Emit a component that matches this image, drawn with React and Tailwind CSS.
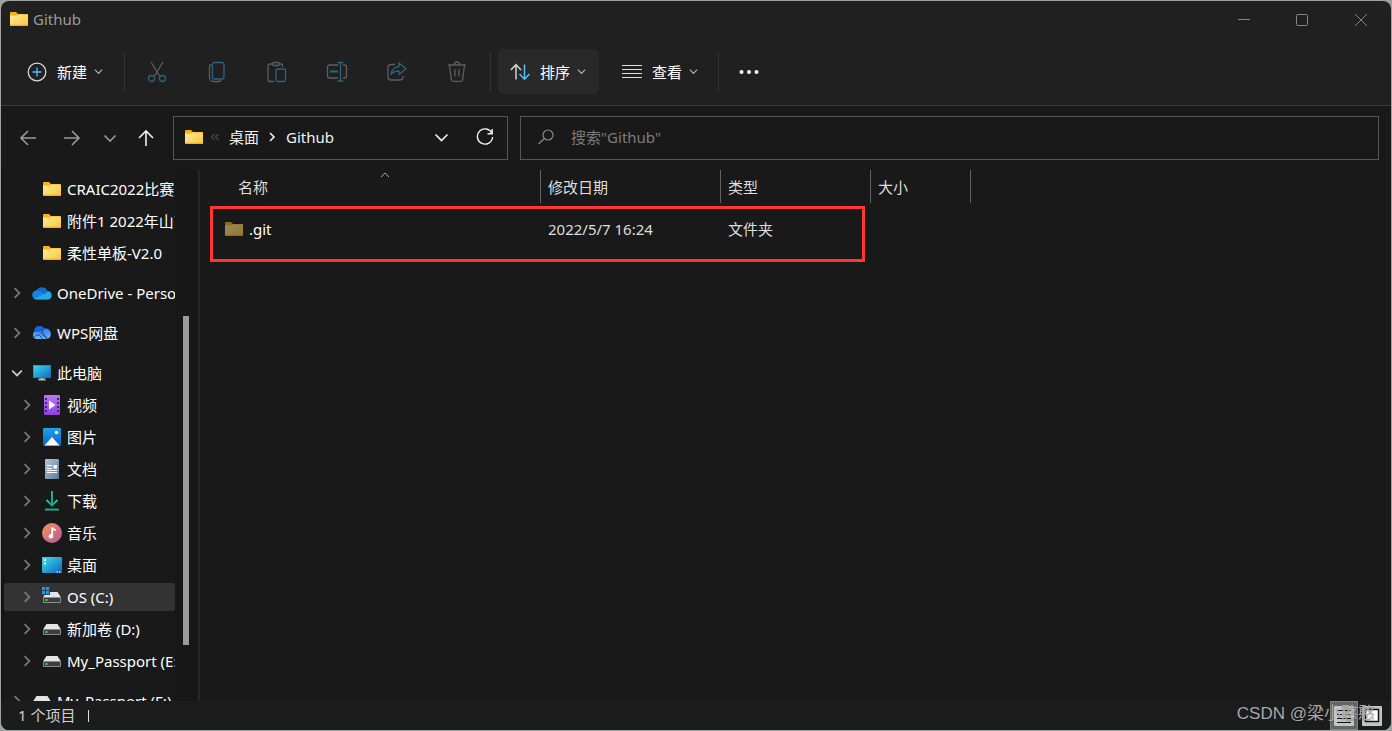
import React, { useState } from "react";

const tree = [
  { label: "CRAIC2022比赛资料", icon: "folder", level: 1, leaf: true },
  { label: "附件1 2022年山东省", icon: "folder", level: 1, leaf: true },
  { label: "柔性单板-V2.0", icon: "folder", level: 1, leaf: true, gap: true },
  { label: "OneDrive - Personal", icon: "onedrive", level: 0, gap: true },
  { label: "WPS网盘", icon: "wps", level: 0, gap: true },
  { label: "此电脑", icon: "pc", level: 0, open: true },
  { label: "视频", icon: "video", level: 1 },
  { label: "图片", icon: "picture", level: 1 },
  { label: "文档", icon: "doc", level: 1 },
  { label: "下载", icon: "download", level: 1 },
  { label: "音乐", icon: "music", level: 1 },
  { label: "桌面", icon: "desktop", level: 1 },
  { label: "OS (C:)", icon: "osdrive", level: 1 },
  { label: "新加卷 (D:)", icon: "drive", level: 1 },
  { label: "My_Passport (E:)", icon: "drive", level: 1, gap: true },
  { label: "My_Passport (F:)", icon: "drive", level: 0 },
];

function Folder({ className = "" }) {
  return (
    <svg width="20" height="20" viewBox="0 0 20 20" className={"shrink-0 " + className}>
      <defs>
        <linearGradient id="folder" x1="0" y1="0" x2="1" y2="1">
          <stop offset="0" stopColor="#ffe9a0" />
          <stop offset="1" stopColor="#ffc633" />
        </linearGradient>
      </defs>
      <path d="M1 4a1 1 0 0 1 1-1h5l2 2h9a1 1 0 0 1 1 1v4H1z" fill="#f8b20f" />
      <path d="M1 6.5h6.5L9 5.4h9.5a.5.5 0 0 1 .5.5V16a1 1 0 0 1-1 1H2a1 1 0 0 1-1-1z" fill="url(#folder)" />
      <path d="M1 16.3h18" stroke="#e9a820" strokeWidth="1" />
    </svg>
  );
}

function Drive({ os }) {
  return (
    <svg width="20" height="20" viewBox="0 0 20 20" className="shrink-0">
      <path d="M4.5 5h11L19 10.5H1z" fill="#e4e4e8" />
      <rect x="1" y="10" width="18" height="6" rx="1" fill="#8b8b8b" />
      <rect x="2" y="11" width="16" height="4" fill="#3d3d3d" />
      <rect x="3.5" y="12" width="2" height="2" fill="#3ddc3d" />
      {os && (
        <>
          <path d="M0 0h8v8H0z" fill="#333" />
          <path d="M0 0h3.2v3.2H0zM4 0h3.2v3.2H4zM0 4h3.2v3.2H0zM4 4h3.2v3.2H4z" fill="#2196e8" />
        </>
      )}
    </svg>
  );
}

function ItemIcon({ name }) {
  if (name === "folder") return <Folder />;
  if (name === "drive") return <Drive />;
  if (name === "osdrive") return <Drive os />;
  return (
    <svg width="20" height="20" viewBox="0 0 20 20" className="shrink-0">
      <defs>
        <linearGradient id="screen" x1="0" y1="0" x2="1" y2="1">
          <stop offset="0" stopColor="#3ee0e6" />
          <stop offset="1" stopColor="#0c66c4" />
        </linearGradient>
        <linearGradient id="film" x1="0" y1="0" x2="0" y2="1">
          <stop offset="0" stopColor="#b877f5" />
          <stop offset="1" stopColor="#8b41e0" />
        </linearGradient>
        <linearGradient id="photo" x1="0" y1="0" x2="0" y2="1">
          <stop offset="0" stopColor="#1ea4ee" />
          <stop offset="1" stopColor="#0a62bb" />
        </linearGradient>
        <linearGradient id="paper" x1="0" y1="0" x2="1" y2="1">
          <stop offset="0" stopColor="#b4c8d8" />
          <stop offset="1" stopColor="#567b9e" />
        </linearGradient>
        <linearGradient id="note" x1="0" y1="0" x2="1" y2="1">
          <stop offset="0" stopColor="#f79558" />
          <stop offset="1" stopColor="#b3559b" />
        </linearGradient>
        <linearGradient id="arrow" x1="0" y1="0" x2="0" y2="1">
          <stop offset="0" stopColor="#26d07c" />
          <stop offset="1" stopColor="#14a3a3" />
        </linearGradient>
        <linearGradient id="wps" x1="0" y1="0" x2="0" y2="1">
          <stop offset="0" stopColor="#1b6ef5" />
          <stop offset="1" stopColor="#6fbcff" />
        </linearGradient>
      </defs>
      {name === "onedrive" && (
        <>
          <path d="M4.5 16.5A4.5 4.5 0 0 1 4.3 7.6 6.2 6.2 0 0 1 15.6 8a4.3 4.3 0 0 1 .2 8.5z" fill="#0f6cc9" />
          <path d="M2 15.6A4.5 4.5 0 0 1 4.3 7.6q2.2-.4 4 .8l4 2.4-9 5.4z" fill="#1583e0" />
          <path d="M2.2 15.8l8.3-4 2.7-1q2-3 4.4-2.2a4.3 4.3 0 0 1-1.8 7.9H4.5a4 4 0 0 1-2.3-.7z" fill="#28a8ea" />
        </>
      )}
      {name === "wps" && (
        <>
          <path d="M2.3 8Q3 3 7.600 3q3.200 0 4.800 2.600Q17 4.500 18.700 9.500q.8 4.500-3.200 6.500H4.500Q1 15.500 1 12q0-2.500 1.300-4z" fill="url(#wps)" />
          <path d="M2.300 8Q3 3 7.600 3q3 0 4.600 2.400-2.400 1.300-2.200 3.600Q6.500 6 2.300 8z" fill="#1460f0" />
          <path d="M2.300 8.400q4-2 7 1.600l5.200 6M12.300 5.600q-3 1.800-1.200 4.600l4.600 5.600M1.500 14.500q3-3.500 6-2.500l3 4" fill="none" stroke="#1d3f78" strokeWidth=".9" />
        </>
      )}
      {name === "pc" && (
        <>
          <path d="M6.500 16.500h7M10 14v2.500" stroke="#b8bcc0" strokeWidth="2" />
          <rect x="1" y="2" width="18" height="13" fill="url(#screen)" />
          <path d="M1 2.500h18M18.500 2v13M1 14.500h18M1.500 2v13" stroke="#1e76a8" strokeWidth="1" opacity=".6" />
        </>
      )}
      {name === "video" && (
        <>
          <rect x="2" y="0" width="16" height="20" rx="1" fill="url(#film)" />
          <path d="M4 3v16M16 3v16" stroke="#462079" strokeWidth="2" strokeDasharray="2 2" />
          <path d="M7 5.500l6.500 4.500L7 14.500z" fill="#fff" />
        </>
      )}
      {name === "picture" && (
        <>
          <rect x="1" y="1" width="18" height="18" rx="1" fill="url(#photo)" />
          <path d="M2.500 18.500l7.500-8.500 7.500 8.500z" fill="#f5faff" />
          <circle cx="14.500" cy="5.500" r="1.700" fill="#fff" />
        </>
      )}
      {name === "doc" && (
        <>
          <rect x="3" y="0" width="14" height="20" rx="1" fill="url(#paper)" />
          <path d="M5 6.500h5M5 9.500h5M5 11.500h10M5 13.500h10" stroke="#fff" strokeWidth="1" />
          <path d="M11.500 6h3.500v3.500h-3.500z" fill="#fff" />
        </>
      )}
      {name === "download" && (
        <g fill="none" stroke="url(#arrow)" strokeWidth="1.800">
          <path d="M4.500 9l5.500 5.500L15.500 9" />
          <path d="M9.900 0L10.100 14.500" />
          <path d="M3 18.500L17 18.600" stroke="#1bb38f" />
        </g>
      )}
      {name === "music" && (
        <>
          <circle cx="10" cy="10" r="10" fill="url(#note)" />
          <circle cx="8.800" cy="13.300" r="2.200" fill="#fff" />
          <path d="M10.200 13.500V4.500q1 2.500 3.500 2.500" fill="none" stroke="#fff" strokeWidth="1.800" />
        </>
      )}
      {name === "desktop" && (
        <>
          <rect x="0" y="2" width="20" height="16" rx="1" fill="url(#screen)" />
          <path d="M2 4h2v2H2zM2 7.500h2v2H2z" fill="#fff" />
          <path d="M14.500 17h1.500M17 17h1.500" stroke="#fff" strokeWidth="1.200" />
        </>
      )}
    </svg>
  );
}

function Chevron({ dir = "down", size = 10, width = 1.2 }) {
  const paths = {
    down: "M1 3l4 4 4-4",
    right: "M3 1l4 4-4 4",
    up: "M1 7l4-4 4 4",
  };
  return (
    <svg width={size} height={size} viewBox="0 0 10 10" fill="none" stroke="currentColor" strokeWidth={width} className="shrink-0">
      <path d={paths[dir]} />
    </svg>
  );
}

function Divider() {
  return <div className="h-10 w-px shrink-0 bg-[#353535]" />;
}

function MenuButton({ label, active, children }) {
  return (
    <button className={"flex h-[45px] items-center rounded-md pl-3 pr-[13px] text-white " + (active ? "bg-[#292929]" : "")}>
      {children}
      <span className="ml-2.5 mr-1.5">{label}</span>
      <span className="flex w-2.5 justify-center text-[#b4b4b4]">
        <Chevron size={9} width={1.3} />
      </span>
    </button>
  );
}

function ToolButton({ label, children }) {
  return (
    <button disabled aria-label={label} className="flex h-[45px] w-[60px] items-center justify-center text-[#5e5e5e]">
      <svg width="22" height="22" viewBox="0 0 22 22" fill="none" stroke="currentColor" strokeWidth="1.3">
        {children}
      </svg>
    </button>
  );
}

function TitleBar() {
  return (
    <header className="flex h-[37px] shrink-0 items-center justify-between pl-2">
      <div className="flex items-center gap-1 pb-0.5 text-[#9b9b9b]">
        <Folder />
        <h1>Github</h1>
      </div>
      <div className="flex h-9 text-[#858585]">
        <button aria-label="最小化" className="flex w-[58px] items-center justify-center">
          <svg width="12" height="12" stroke="currentColor"><path d="M0 5.500h12" /></svg>
        </button>
        <button aria-label="最大化" className="flex w-[58px] items-center justify-center">
          <svg width="12" height="12" stroke="currentColor" fill="none"><rect x=".5" y=".5" width="11" height="11" rx="1" /></svg>
        </button>
        <button aria-label="关闭" className="flex w-[60px] items-center justify-center">
          <svg width="12" height="12" stroke="currentColor"><path d="M0 0l12 12M12 0L0 12" /></svg>
        </button>
      </div>
    </header>
  );
}

function Toolbar() {
  return (
    <div className="flex h-[68px] shrink-0 items-center border-b border-[#3b3b3b] pl-3.5">
      <MenuButton label="新建">
        <svg width="20" height="20" viewBox="0 0 20 20" fill="none">
          <circle cx="10" cy="10" r="8.800" stroke="#d8d8d8" strokeWidth="1.300" />
          <path d="M10 5.500v9M5.500 10h9" stroke="#4cc2ff" strokeWidth="1.300" />
        </svg>
      </MenuButton>
      <div className="ml-2 mr-0.5"><Divider /></div>
      <ToolButton label="剪切">
        <path d="M5 1l8.500 14M17 1L8.500 15" />
        <g stroke="#2c6480">
          <circle cx="5.500" cy="17.500" r="3" />
          <circle cx="16.500" cy="17.500" r="3" />
        </g>
      </ToolButton>
      <ToolButton label="复制">
        <path d="M5.500 3.500Q3.500 4 3.500 6v10.500a4 4 0 0 0 4 4h5q2 0 2.500-1.500" />
        <rect x="6.500" y="1.500" width="11.500" height="16.500" rx="2" stroke="#2c6480" />
      </ToolButton>
      <ToolButton label="粘贴">
        <path d="M7 3H4a2 2 0 0 0-2 2v13.500a2 2 0 0 0 2 2h4M13 3h2a1.500 1.500 0 0 1 1.500 1.500V6" />
        <rect x="6.500" y="1.500" width="7" height="3" rx="1.500" />
        <rect x="10" y="8" width="9.500" height="12.500" rx="1.500" stroke="#2c6480" />
      </ToolButton>
      <ToolButton label="重命名">
        <path d="M12 4H3.500a2 2 0 0 0-2 2v9a2 2 0 0 0 2 2H12M17 4h1.500a2 2 0 0 1 2 2v9a2 2 0 0 1-2 2H17" />
        <path d="M14.500 1.500v18.500M11.500 1.500h6M11.500 20h6" stroke="#2c6480" />
        <path d="M4 10.500h8" stroke="#2c6480" strokeWidth="2" />
      </ToolButton>
      <ToolButton label="共享">
        <path d="M9 3.500H5a3 3 0 0 0-3 3V16a3 3 0 0 0 3 3h9a3 3 0 0 0 3-3v-1" />
        <path d="M13 2l7 5.800-7 5.700v-3.500q-5 0-8 3.500 1-7 8-8z" stroke="#2c6480" strokeLinejoin="round" />
      </ToolButton>
      <ToolButton label="删除">
        <path d="M2 4h18M8 4q.5-3 3-3t3 3M3.500 4l1.800 14.500a2 2 0 0 0 2 1.800h7.400a2 2 0 0 0 2-1.800L18.500 4M9 8v7.500M13 8v7.500" />
      </ToolButton>
      <div className="ml-[3px] mr-[7px]"><Divider /></div>
      <MenuButton label="排序" active>
        <svg width="20" height="20" viewBox="0 0 20 20" fill="none" strokeWidth="1.500">
          <path d="M6 17.500V3M.800 8L6 2.700 11 8" stroke="#d0d0d0" />
          <path d="M14.500 2.500V17M9.500 12l5 5.200 5-5.200" stroke="#4cc2ff" />
        </svg>
      </MenuButton>
      <div className="w-[11px]" />
      <MenuButton label="查看">
        <svg width="20" height="20" stroke="#dcdcdc" strokeWidth="1">
          <path d="M0 3.500h20M0 7.500h20M0 11.500h20M0 15.500h20" />
        </svg>
      </MenuButton>
      <div className="ml-[7px] mr-3"><Divider /></div>
      <button aria-label="更多" className="flex h-[45px] w-9 items-center justify-center">
        <svg width="20" height="4" fill="#fff">
          <circle cx="2.500" cy="2" r="2" />
          <circle cx="10" cy="2" r="2" />
          <circle cx="17.500" cy="2" r="2" />
        </svg>
      </button>
    </div>
  );
}

function Arrow({ d, label, className }) {
  return (
    <button aria-label={label} className={"flex h-11 shrink-0 items-center justify-center " + className}>
      <svg width="18" height="18" viewBox="0 0 18 18" fill="none" stroke="currentColor" strokeWidth="1.600">
        <path d={d} />
      </svg>
    </button>
  );
}

function AddressBar() {
  return (
    <div className="flex shrink-0 bg-[#191919] py-2.5 pl-[5px] pr-3">
      <nav className="mr-[7px] flex shrink-0 items-center text-[#9b9b9b]">
        <Arrow label="后退" className="w-11" d="M17 9H2M9 2L2 9l7 7" />
        <Arrow label="前进" className="w-11" d="M1 9h15M9 2l7 7-7 7" />
        <Arrow label="最近" className="w-8" d="M3.500 6.500L9 12l5.500-5.500" />
        <Arrow label="向上" className="w-10 text-[#eee]" d="M9 17V2M2 9l7-7 7 7" />
      </nav>
      <div className="flex h-11 w-[335px] shrink-0 items-center border border-[#565656] pb-0.5 pl-2.5 text-[#f2f2f2]">
        <Folder />
        <svg width="10" height="8" viewBox="0 0 10 8" fill="none" stroke="#666" className="ml-1.5">
          <path d="M4.500 1l-3 3 3 3M8.500 1l-3 3 3 3" />
        </svg>
        <a href="#desktop" className="ml-[9px]">桌面</a>
        <span className="ml-2 mr-[9px]"><Chevron dir="right" width={1.6} /></span>
        <a href="#github">Github</a>
        <button aria-label="历史记录" className="ml-auto flex w-11 justify-center">
          <Chevron size={15} width={1.1} />
        </button>
        <button aria-label="刷新" className="flex w-11 justify-center">
          <svg width="18" height="18" viewBox="0 0 18 18" fill="none" stroke="currentColor" strokeWidth="1.400">
            <path d="M16 5.500A7.600 7.600 0 1 0 16.600 9M16.200 1v4.700h-4.700" />
          </svg>
        </button>
      </div>
      <label className="ml-3 flex h-11 min-w-0 flex-1 items-center border border-[#565656] pb-0.5 pl-4">
        <svg width="18" height="18" viewBox="0 0 18 18" fill="none" stroke="#8a8a8a" strokeWidth="1.200">
          <circle cx="11" cy="7" r="5" />
          <path d="M7.500 10.500L1.500 16" />
        </svg>
        <input
          aria-label="搜索"
          placeholder={'搜索"Github"'}
          className="ml-4 min-w-0 flex-1 bg-transparent outline-none placeholder:text-[#7b7b7b]"
        />
      </label>
    </div>
  );
}

function Sidebar() {
  const [selected, setSelected] = useState("OS (C:)");
  return (
    <aside className="flex w-[200px] shrink-0 overflow-hidden">
      <ul className="min-h-0 w-[174px] overflow-hidden border-l-3 border-[#141414] pt-[3px]">
        {tree.map((item) => (
          <li key={item.label} className={"flex h-8 items-center " + (item.gap ? "mb-2" : "")}>
            <button
              onClick={() => setSelected(item.label)}
              className={
                "flex h-7 w-full items-center overflow-hidden whitespace-nowrap rounded-xs text-white " +
                (item.level ? "pl-[17px] " : "pl-[7px] ") +
                (selected === item.label ? "bg-[#333]" : "")
              }
            >
              <span className={"flex w-3 shrink-0 justify-center " + (item.open ? "text-[#c8c8c8]" : "text-[#777]")}>
                {!item.leaf && <Chevron dir={item.open ? "down" : "right"} size={12} width={1.5} />}
              </span>
              <span className="ml-[9px] mr-[5px]">
                <ItemIcon name={item.icon} />
              </span>
              {item.label}
            </button>
          </li>
        ))}
      </ul>
      <div className="flex w-[22px] flex-col items-center bg-[#171717]">
        <div className="flex-[146]" />
        <div className="w-1.5 flex-[329] bg-[#9a9a9a]" />
        <div className="flex-[56]" />
      </div>
      <div className="ml-px w-0.5 bg-[#272727]" />
    </aside>
  );
}

function FileList() {
  return (
    <main className="relative min-w-0 flex-1 overflow-hidden">
      <table className="w-[770px] table-fixed border-separate border-spacing-0 text-left text-[#dedede]">
        <thead>
          <tr className="h-[33px]">
            <th className="relative w-[340px] border-r border-[#636363] pl-[37px] font-normal">
              名称
              <span className="absolute left-[29px] right-0 top-0 flex justify-center text-[#aaa]">
                <Chevron dir="up" width={1} />
              </span>
            </th>
            <th className="w-[180px] border-r border-[#636363] pl-[7px] font-normal">修改日期</th>
            <th className="w-[150px] border-r border-[#636363] pl-[7px] font-normal">类型</th>
            <th className="w-[100px] border-r border-[#636363] pl-[7px] font-normal">大小</th>
          </tr>
        </thead>
        <tbody>
          <tr className="h-[52px]">
            <td className="pl-[23px]">
              <a href="#git" className="flex items-center gap-[5px] text-white">
                <Folder className="opacity-55" />
                .git
              </a>
            </td>
            <td className="pl-[7px]">2022/5/7 16:24</td>
            <td className="pl-[7px]">文件夹</td>
            <td></td>
          </tr>
        </tbody>
      </table>
      <div className="pointer-events-none absolute left-[9px] top-9 h-14 w-[655px] border-3 border-[#ff3636]" />
    </main>
  );
}

function StatusBar() {
  return (
    <footer className="relative flex h-[29px] shrink-0 items-center bg-[#1c1c1c] pl-[17px] pr-2 text-[#d0d0d0]">
      <span className="pb-0.5">1 个项目</span>
      <div className="ml-[13px] h-3 w-px bg-[#ddd]" />
      <button aria-label="详细信息" className="ml-auto flex h-full w-7 items-center justify-center border border-[#808080] bg-[#666]">
        <svg width="20" height="20">
          <rect width="20" height="20" rx="1" fill="#c4c4c4" />
          <path d="M3 4.500h6M11 4.500h6M3 8.500h6M11 8.500h6M3 12.500h14M3 16.500h14" stroke="#111" strokeWidth="1" />
        </svg>
      </button>
      <button aria-label="大图标" className="ml-1 mr-px flex h-full w-5 items-center justify-center">
        <svg width="20" height="20">
          <rect width="20" height="20" rx="1" fill="#c4c4c4" />
          <rect x="3.500" y="3.500" width="13" height="12" fill="#fff" stroke="#111" strokeWidth="1.500" />
        </svg>
      </button>
      <span className="pointer-events-none absolute bottom-1 right-4 whitespace-nowrap font-['Liberation_Sans','Noto_Sans_CJK_SC',sans-serif] text-[17px] leading-6 text-[#a8a8a8] text-shadow-xs">
        CSDN @梁小憨憨
      </span>
    </footer>
  );
}

export default function App() {
  return (
    <div className="h-screen bg-[#a0a2a2] p-px font-['Noto_Sans','Noto_Sans_CJK_SC',sans-serif] text-[15px] leading-5">
      <div className="flex h-full flex-col overflow-hidden rounded-lg bg-[#202020]">
        <TitleBar />
        <Toolbar />
        <AddressBar />
        <div className="flex min-h-0 flex-1 bg-[#191919]">
          <Sidebar />
          <FileList />
        </div>
        <StatusBar />
      </div>
    </div>
  );
}
